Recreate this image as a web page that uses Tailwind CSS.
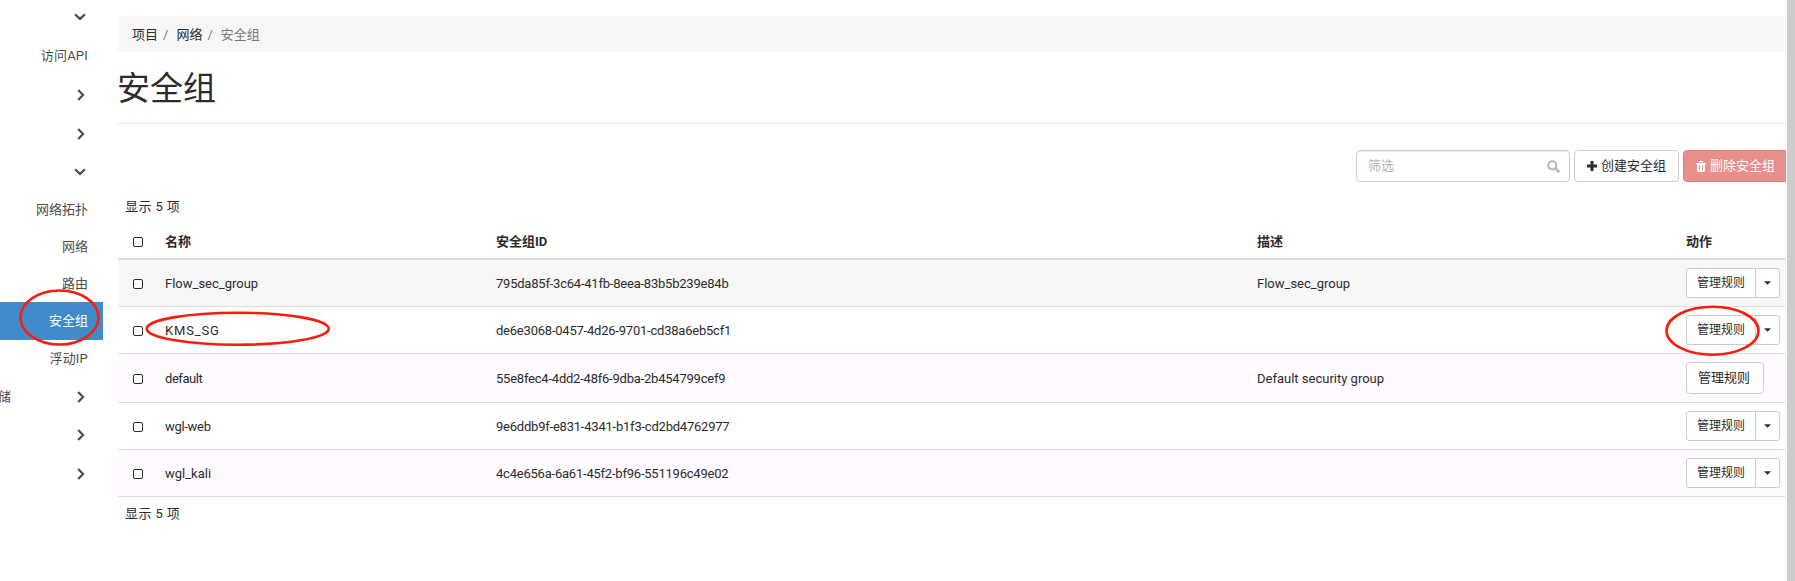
<!DOCTYPE html>
<html lang="zh-CN">
<head>
<meta charset="utf-8">
<title>安全组</title>
<script src="https://cdn.jsdelivr.net/npm/@tailwindcss/browser@4"></script>
</head>
<body class="bg-white">
<svg class="hidden">
  <symbol id="down" viewBox="0 0 12 8"><path d="M1 1.2 6 5.9 11 1.2" fill="none" stroke="#4c4c4c" stroke-width="2.2"/></symbol>
  <symbol id="right" viewBox="0 0 8 12"><path d="M1.2 1 6 6 1.2 11" fill="none" stroke="#4c4c4c" stroke-width="2.2"/></symbol>
</svg>
<div class="relative flex h-[581px] w-[1795px] overflow-hidden font-[Roboto,'Noto_Sans_CJK_SC',sans-serif] text-[13px] leading-[18px] text-[#2b2b2b]">
  <nav class="flex w-[103px] shrink-0 flex-col text-[#4c4c4c]">
    <div class="flex h-[37px] items-center justify-end pr-[17px] pb-[3px]"><svg class="h-2 w-3"><use href="#down"/></svg></div>
    <div class="flex h-[38px] items-center justify-end pr-[15px]"><span class="tracking-[0.2px]">访问API</span></div>
    <div class="flex h-[39px] items-center justify-end pr-[18px]"><svg class="h-3 w-2"><use href="#right"/></svg></div>
    <div class="flex h-[39px] items-center justify-end pr-[18px]"><svg class="h-3 w-2"><use href="#right"/></svg></div>
    <div class="flex h-[38px] items-center justify-end pr-[17px]"><svg class="h-2 w-3"><use href="#down"/></svg></div>
    <div class="flex h-[37px] items-center justify-end pr-[15px]">网络拓扑</div>
    <div class="flex h-[37px] items-center justify-end pr-[15px]">网络</div>
    <div class="flex h-[37px] items-center justify-end pr-[15px]">路由</div>
    <div class="flex h-[38px] items-center justify-end bg-[#428bca] pr-[15px] text-white">安全组</div>
    <div class="flex h-[37px] items-center justify-end pr-[15px]"><span class="tracking-[0.2px]">浮动IP</span></div>
    <div class="flex h-[39px] items-center justify-between pr-[18px]"><span class="-ml-[2px]">储</span><svg class="h-3 w-2"><use href="#right"/></svg></div>
    <div class="flex h-[38px] items-center justify-end pr-[18px]"><svg class="h-3 w-2"><use href="#right"/></svg></div>
    <div class="flex h-[39px] items-center justify-end pr-[18px]"><svg class="h-3 w-2"><use href="#right"/></svg></div>
  </nav>
  <main class="ml-[15px] w-[1668px] shrink-0 overflow-hidden pt-4">
    <div class="flex h-9 items-center rounded-l bg-[#f7f7f7] pt-[2px] pl-[14px]"><span>项目</span><span class="mr-2 ml-[5px] text-[#777]">/</span><span>网络</span><span class="mr-2 ml-[5px] text-[#777]">/</span><span class="text-[#777]">安全组</span></div>
    <h1 class="flex h-[72px] items-center border-b border-[#eee] pt-[2px] text-[33px] leading-none font-normal"><span class="-ml-[1px]">安全组</span></h1>
    <div class="mt-[26px] flex h-8 w-[1680px] gap-1 pl-[1238px]">
      <div class="flex w-[214px] shrink-0 items-center justify-between rounded border border-[#ccc] pr-[9px] pl-[11px] text-[#b5b5b5] shadow-[inset_0_1px_1px_rgba(0,0,0,0.075)]"><span>筛选</span><svg class="size-[13px]" viewBox="0 0 13 13" fill="none" stroke="#b5b5b5"><circle cx="5.3" cy="5.3" r="4.1" stroke-width="2"/><path d="m8.3 8.3 4 4" stroke-width="2.4"/></svg></div>
      <div class="flex w-[105px] shrink-0 items-center rounded border border-[#ccc] pl-3"><svg class="mr-[4px] size-[10px]" viewBox="0 0 10 10"><path d="M3.500 0h3v3.500H10v3H6.500V10h-3V6.500H0v-3h3.500z" fill="#2b2b2b"/></svg>创建安全组</div>
      <div class="flex w-[118px] shrink-0 items-center rounded border border-[#e57c78] bg-[#e88f8c] pl-3 text-white"><svg class="mr-[4px] h-[11px] w-[10px]" viewBox="0 0 10 11"><path d="M0 2h3V.8L3.800 0h2.400L7 .8V2h3v1.300H9V10l-1 1H2l-1-1V3.300H0zM4 1v1h2V1zM3 4v5.500h.9V4zm3.100 0v5.500H7V4z" fill="#fff" fill-rule="evenodd"/></svg>删除安全组</div>
    </div>
    <div class="mt-4 flex h-[18px] items-center pl-[7px] tracking-[0.4px]">显示 5 项</div>
    <div class="mt-2 grid h-[36px] grid-cols-[47px_331px_761px_429px_100px] items-center border-b-2 border-[#ddd] pt-px font-bold"><i class="ml-[15px] size-[10px] rounded-[2px] border border-[#2b2b2b] bg-white"></i><span>名称</span><span>安全组ID</span><span>描述</span><span>动作</span></div>
    <div class="grid h-[47px] grid-cols-[47px_331px_761px_429px_100px] items-center border-b border-[#ddd] bg-[#f7f7f7]"><i class="mt-px ml-[15px] size-[10px] rounded-[2px] border border-[#2b2b2b] bg-white"></i><span class="pt-[2px]">Flow_sec_group</span><span class="pt-[2px] tracking-[-0.22px]">795da85f-3c64-41fb-8eea-83b5b239e84b</span><span class="pt-[2px]">Flow_sec_group</span>
      <div class="flex h-[30px] w-[94px] rounded-[3px] border border-[#ccc] bg-white text-xs"><span class="flex w-[69px] items-center border-r border-[#ccc] pl-[10px]">管理规则</span><span class="flex flex-1 items-center justify-center"><svg class="h-1 w-[7px]" viewBox="0 0 8 4"><path d="M0 0h8L4 4z" fill="#2b2b2b"/></svg></span></div></div>
    <div class="grid h-[47px] grid-cols-[47px_331px_761px_429px_100px] items-center border-b border-[#ddd]"><i class="mt-px ml-[15px] size-[10px] rounded-[2px] border border-[#2b2b2b] bg-white"></i><span class="pt-[2px] tracking-[0.85px]">KMS_SG</span><span class="pt-[2px] tracking-[-0.22px]">de6e3068-0457-4d26-9701-cd38a6eb5cf1</span><span></span>
      <div class="flex h-[30px] w-[94px] rounded-[3px] border border-[#ccc] bg-white text-xs"><span class="flex w-[69px] items-center border-r border-[#ccc] pl-[10px]">管理规则</span><span class="flex flex-1 items-center justify-center"><svg class="h-1 w-[7px]" viewBox="0 0 8 4"><path d="M0 0h8L4 4z" fill="#2b2b2b"/></svg></span></div></div>
    <div class="grid h-[49px] grid-cols-[47px_331px_761px_429px_100px] items-center border-b border-[#ddd] bg-[#fefaff]"><i class="mt-px ml-[15px] size-[10px] rounded-[2px] border border-[#2b2b2b] bg-white"></i><span class="pt-[2px] tracking-[-0.45px]">default</span><span class="pt-[2px] tracking-[-0.22px]">55e8fec4-4dd2-48f6-9dba-2b454799cef9</span><span class="pt-[2px]">Default security group</span>
      <div class="flex h-8 w-[78px] items-center rounded border border-[#ccc] bg-white pl-[11px]">管理规则</div></div>
    <div class="grid h-[47px] grid-cols-[47px_331px_761px_429px_100px] items-center border-b border-[#ddd]"><i class="mt-px ml-[15px] size-[10px] rounded-[2px] border border-[#2b2b2b] bg-white"></i><span class="pt-[2px] tracking-[-0.3px]">wgl-web</span><span class="pt-[2px] tracking-[-0.22px]">9e6ddb9f-e831-4341-b1f3-cd2bd4762977</span><span></span>
      <div class="flex h-[30px] w-[94px] rounded-[3px] border border-[#ccc] bg-white text-xs"><span class="flex w-[69px] items-center border-r border-[#ccc] pl-[10px]">管理规则</span><span class="flex flex-1 items-center justify-center"><svg class="h-1 w-[7px]" viewBox="0 0 8 4"><path d="M0 0h8L4 4z" fill="#2b2b2b"/></svg></span></div></div>
    <div class="grid h-[47px] grid-cols-[47px_331px_761px_429px_100px] items-center border-b border-[#ddd] bg-[#fefaff]"><i class="mt-px ml-[15px] size-[10px] rounded-[2px] border border-[#2b2b2b] bg-white"></i><span class="pt-[2px]">wgl_kali</span><span class="pt-[2px] tracking-[-0.22px]">4c4e656a-6a61-45f2-bf96-551196c49e02</span><span></span>
      <div class="flex h-[30px] w-[94px] rounded-[3px] border border-[#ccc] bg-white text-xs"><span class="flex w-[69px] items-center border-r border-[#ccc] pl-[10px]">管理规则</span><span class="flex flex-1 items-center justify-center"><svg class="h-1 w-[7px]" viewBox="0 0 8 4"><path d="M0 0h8L4 4z" fill="#2b2b2b"/></svg></span></div></div>
    <div class="mt-[8px] flex h-[18px] items-center pl-[7px] tracking-[0.4px]">显示 5 项</div>
  </main>
  <div class="ml-[1px] w-2 shrink-0 bg-[#ccc]"></div>
  <svg class="pointer-events-none absolute inset-0 h-[581px] w-[1795px]" fill="none" stroke="#fb1c0e" stroke-width="2.6"><ellipse cx="59.500" cy="317.500" rx="39" ry="27"/><ellipse cx="237.700" cy="328.700" rx="91" ry="16"/><ellipse cx="1712.500" cy="330.700" rx="46" ry="24"/></svg>
</div>
</body>
</html>
